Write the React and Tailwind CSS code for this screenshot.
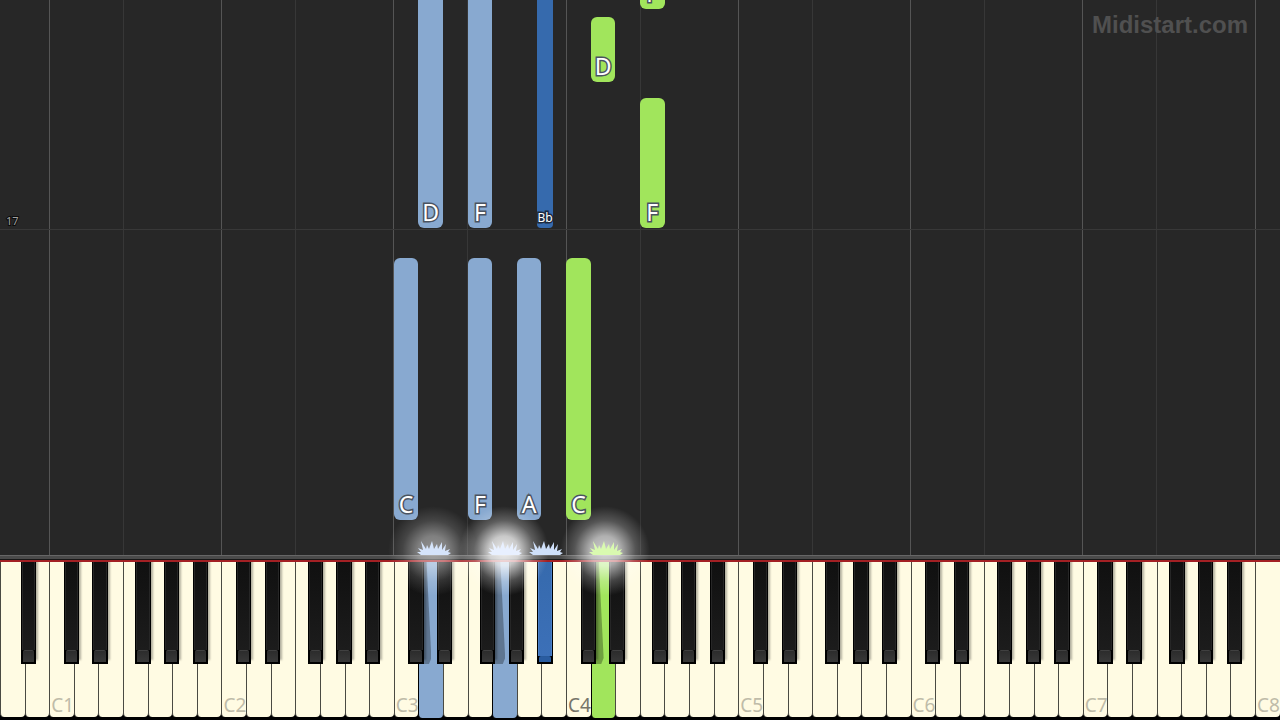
const WHITE_KEYS = 52;
const WHITE_WIDTH = 100 / WHITE_KEYS;
const SEMITONE_WIDTH = (WHITE_WIDTH * 7) / 12;

// White keys are indexed from A0, so every C sits at 2, 9, 16...
const octaveStart = (octave) => (octave * 7 - 5) * WHITE_WIDTH;
const blackLeft = (octave, semitone) => octaveStart(octave) + semitone * SEMITONE_WIDTH;

const whiteKeys = Array.from({ length: WHITE_KEYS }, (_, i) => ({
    index: i,
    isC: i % 7 === 2,
    isF: i % 7 === 5,
    label: i % 7 === 2 ? `C${(i + 5) / 7}` : ''
}));

const blackKeys = [{ octave: 0, semitone: 10 }];
for (let octave = 1; octave <= 7; octave++) {
    [1, 3, 6, 8, 10].forEach(semitone => blackKeys.push({ octave, semitone }));
}

const HAND_COLORS = {
    left: 'bg-[#88a9d0]',
    leftSharp: 'bg-[#366aad]',
    right: 'bg-[#a1e55c]'
};

const pressedWhite = { 17: 'left', 20: 'left', 24: 'right' };
const isPressedBlack = (key) => key.octave === 3 && key.semitone === 10;

// start and length are measured upwards from the hit line
const notes = [
    { name: 'D', key: 17, start: 327, length: 300, hand: 'left' },
    { name: 'F', key: 19, start: 327, length: 300, hand: 'left' },
    { name: 'Bb', octave: 3, semitone: 10, start: 327, length: 300, hand: 'leftSharp' },
    { name: 'F', key: 26, start: 546, length: 60, hand: 'right' },
    { name: 'D', key: 24, start: 473, length: 65, hand: 'right' },
    { name: 'F', key: 26, start: 327, length: 130, hand: 'right' },
    { name: 'C', key: 16, start: 35, length: 262, hand: 'left' },
    { name: 'F', key: 19, start: 35, length: 262, hand: 'left' },
    { name: 'A', key: 21, start: 35, length: 262, hand: 'left' },
    { name: 'C', key: 23, start: 35, length: 262, hand: 'right' }
];

const sparks = [
    { x: 33.8, color: '#d5e4fb', glow: 0.55 },
    { x: 39.4, color: '#e8f0ff', glow: 1 },
    { x: 42.6, color: '#cfe0fa', glow: 0 },
    { x: 47.3, color: '#d9fab0', glow: 0.85 }
];

function Note({ note }) {
    const sharp = note.semitone !== undefined;
    const left = sharp ? blackLeft(note.octave, note.semitone) : note.key * WHITE_WIDTH;

    return (
        <div
            className={`absolute flex items-end justify-center ${sharp ? 'w-[1.2%] rounded-sm' : 'w-[1.92%] rounded-md'} ${HAND_COLORS[note.hand]}`}
            style={{ left: `${left}%`, bottom: note.start, height: note.length }}
        >
            <span
                className={`text-white [paint-order:stroke_fill] ${sharp
                    ? 'pb-[3px] text-[12px] leading-[14px] [-webkit-text-stroke:3px_#1c2a40]'
                    : 'pb-px text-[23px] leading-[30px] [-webkit-text-stroke:3px_#4a5360]'}`}
            >
                {note.name}
            </span>
        </div>
    );
}

function Spark({ spark }) {
    return (
        <div className="absolute bottom-0 h-0 w-0" style={{ left: `${spark.x}%` }}>
            {spark.glow > 0 && (
                <div
                    className="absolute -left-12 -top-13 h-24 w-24 rounded-full bg-[radial-gradient(circle,rgba(255,255,255,0.9)_0%,rgba(255,255,255,0.75)_22%,rgba(255,255,255,0.25)_45%,transparent_66%)]"
                    style={{ opacity: spark.glow }}
                />
            )}
            <svg viewBox="0 0 34 16" className="absolute -left-4 -top-4 h-4 w-8.5">
                <path
                    d="M4 16L0 13L4 13L1 9L6 11L4 2L9 10L10 6L12 10L15 2L17 10L20 5L21 10L25 3L25 11L29 5L28 12L33 10L31 13L34 14L31 16Z"
                    fill={spark.color}
                />
            </svg>
        </div>
    );
}

function WhiteKey({ item }) {
    const hand = pressedWhite[item.index];
    return (
        <div
            className={`relative flex min-w-0 flex-1 items-end overflow-hidden rounded-b-sm border-l ${hand
                ? `border-black ${HAND_COLORS[hand]}`
                : 'mb-px border-[#4a4a42] bg-[#fffbe3]'}`}
        >
            {hand && (
                <div className="absolute left-0 top-0 h-[102px] w-3 bg-black/30 [clip-path:polygon(0_0,60%_0,100%_94%,80%_100%,0_100%)]" />
            )}
            {item.label && (
                <span className={`pb-0.5 pl-px text-[19px] leading-[20px] ${item.label === 'C4' ? 'text-[#77756a]' : 'text-[#bfbca9]'}`}>
                    {item.label}
                </span>
            )}
        </div>
    );
}

function BlackKey({ item }) {
    const pressed = isPressedBlack(item);
    return (
        <div
            className={`absolute top-0 flex h-[102px] w-[1.2%] flex-col bg-black px-px pb-0.5 ${pressed ? '' : 'shadow-[2px_-4px_2px_rgba(0,0,0,0.3)]'}`}
            style={{ left: `${blackLeft(item.octave, item.semitone)}%` }}
        >
            <div
                className={`flex-1 border-x ${pressed
                    ? 'border-[#4a80c8] bg-linear-to-b from-[#366aad] to-[#3c70b8]'
                    : 'border-[#262626] bg-linear-to-b from-[#101010] to-[#1c1c1c]'}`}
            />
            <div
                className={`mx-px rounded-t-xs border-t ${pressed
                    ? 'h-1.5 border-[#285a9c] bg-[#2a5ca0]'
                    : 'h-3 border-[#404040] bg-linear-to-b from-[#2c2c2c] to-[#383838]'}`}
            />
        </div>
    );
}

function Roll() {
    return (
        <div className="relative min-h-0 flex-1 overflow-hidden bg-[#272727]">
            <div className="flex h-full">
                {whiteKeys.map(item => (
                    <div
                        key={item.index}
                        className={`min-w-0 flex-1 ${item.isC ? 'border-l border-[#555555]' : item.isF ? 'border-l border-[#373737]' : ''}`}
                    />
                ))}
            </div>
            {/* Bar line */}
            <div className="absolute inset-x-0 bottom-[325px] border-t border-[#383838]">
                <span className="absolute bottom-[3px] left-1.5 text-[11px] leading-[12px] text-[#a0a0a0] [-webkit-text-stroke:2px_#0c0c0c] [paint-order:stroke_fill]">
                    17
                </span>
            </div>
            {notes.map((note, idx) => (
                <Note key={idx} note={note} />
            ))}
            <div className="absolute right-8 top-2.5 font-['Liberation_Sans',sans-serif] text-[24px] font-bold leading-[30px] text-[#505050]">
                Midistart.com
            </div>
        </div>
    );
}

export default function App() {
    return (
        <main className="relative flex h-screen flex-col overflow-hidden bg-black font-['Noto_Sans',sans-serif]">
            <Roll />
            <div className="h-1 border-t border-[#666666] bg-[#4a4a4a]" />
            <div className="h-[3px] border-t border-[#181818] bg-[#a32024]" />
            <div className="relative flex h-[156px] overflow-hidden bg-black">
                {whiteKeys.map(item => (
                    <WhiteKey key={item.index} item={item} />
                ))}
                {blackKeys.map(item => (
                    <BlackKey key={`${item.octave}-${item.semitone}`} item={item} />
                ))}
            </div>
            <div className="h-0.5" />
            {/* Impact effects sit over both the roll and the keys */}
            <div className="absolute inset-x-0 bottom-[165px]">
                {sparks.map(spark => (
                    <Spark key={spark.x} spark={spark} />
                ))}
            </div>
        </main>
    );
}
